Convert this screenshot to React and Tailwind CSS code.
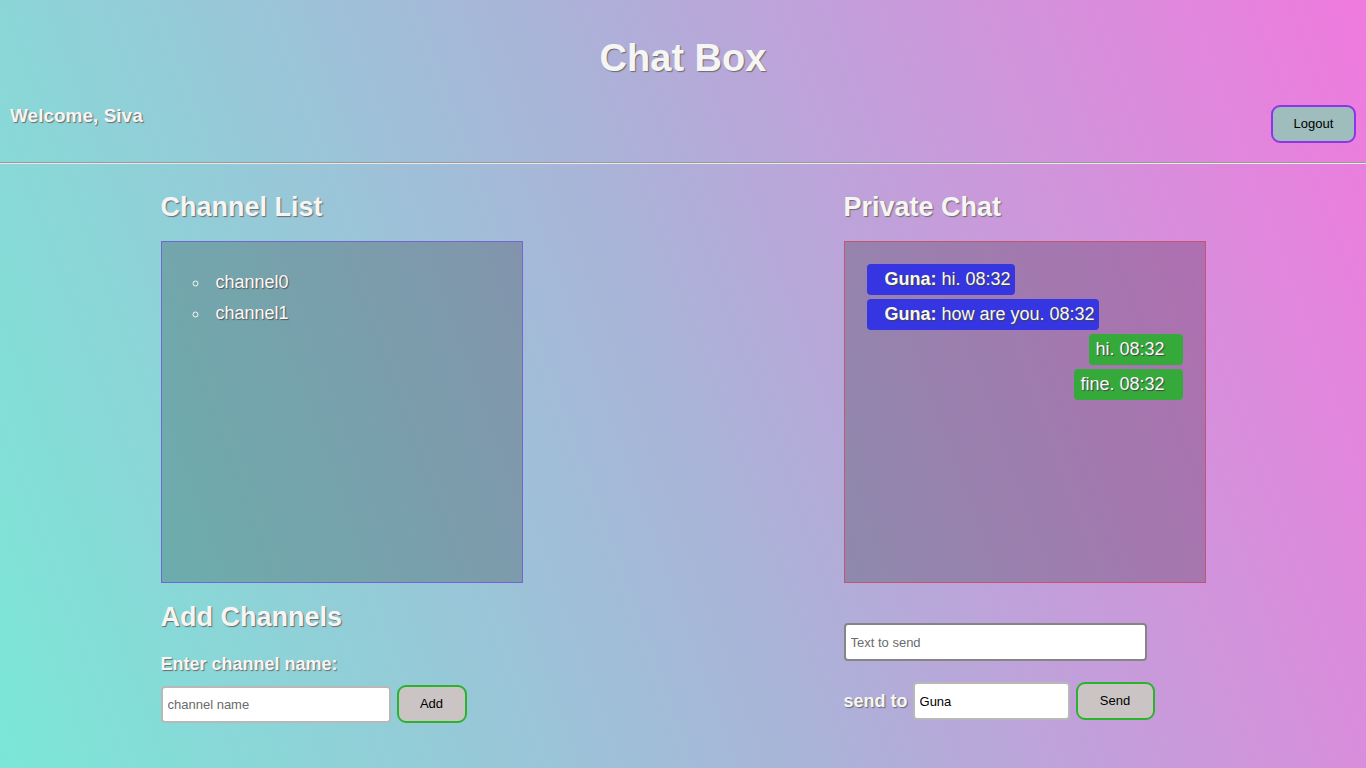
export default function App() {
  const shadow = "[text-shadow:1px_1px_1px_#6b6b6b]";
  return (
    <div
      className="min-h-screen w-full bg-[linear-gradient(70deg,#7be7d7,#aab3d8_50%,#f07ade)] text-white"
      style={{ fontFamily: '"Liberation Sans", Arial, sans-serif' }}
    >
      {/* Header */}
      <div className="pt-[36px] text-center">
        <h1 className="text-[38px] font-bold leading-[44px] text-[#f5f5f5] [text-shadow:1px_1px_1px_#6b6b6b]">Chat Box</h1>
      </div>
      <div className="flex items-start justify-between px-[10px] pt-[25px]">
        <div className="text-[19px] font-bold leading-[22px] text-[#f5f5f5] [text-shadow:1px_1px_1px_#6b6b6b]">Welcome, Siva</div>
        <button className="h-[38px] w-[85px] rounded-[9px] border-2 border-[#8d35e8] bg-[#9ebdbc] text-[13px] text-black">
          Logout
        </button>
      </div>
      <div className="mt-[19px] h-[2px] border-t border-b border-t-[#9a9a9a] border-b-[#e8e8e8]" />

      {/* Columns */}
      <div className="grid grid-cols-2">
        {/* Left */}
        <div className="mx-auto w-[362px] pt-[28px]">
          <h2 className={`text-[27px] font-bold leading-[30px] text-[#f5f5f5] ${shadow}`}>Channel List</h2>
          <div className="mt-[19px] h-[342px] border border-[#7466d0] bg-black/20">
            <ul className="list-[circle] pl-[48px] pt-[25px] text-[18px] leading-[31px] text-[#f8f8f8] [text-shadow:1px_1px_1px_#555]">
              <li className="pl-[6px]">channel0</li>
              <li className="pl-[6px]">channel1</li>
            </ul>
          </div>
          <h2 className={`mt-[19px] text-[27px] font-bold leading-[30px] text-[#f5f5f5] ${shadow}`}>Add Channels</h2>
          <div className={`mt-[22px] text-[18px] font-bold leading-[20px] text-[#f5f5f5] ${shadow}`}>Enter channel name:</div>
          <div className="mt-[11px] flex items-center gap-[6px]">
            <input
              placeholder="channel name"
              className="h-[37px] w-[230px] rounded-[4px] border-2 border-[#b8b8b8] bg-white px-[5px] text-[13px] text-black placeholder:text-[#6b6b6b] outline-none"
            />
            <button className="h-[38px] w-[70px] rounded-[9px] border-2 border-[#2cb22c] bg-[#cbc4c4] text-[13px] text-black">
              Add
            </button>
          </div>
        </div>

        {/* Right */}
        <div className="mx-auto w-[362px] pt-[28px]">
          <h2 className={`text-[27px] font-bold leading-[30px] text-[#f5f5f5] ${shadow}`}>Private Chat</h2>
          <div className="mt-[19px] flex h-[342px] flex-col gap-[4px] border border-[#c25672] bg-black/20 px-[22px] pt-[22px] text-[18px] leading-[31px] text-[#f8f8f8] [text-shadow:1px_1px_1px_#444]">
            <div className="self-start rounded-[4px] bg-[#3535e1] pl-[18px] pr-[4px]">
              <b>Guna:</b> hi. 08:32
            </div>
            <div className="self-start rounded-[4px] bg-[#3535e1] pl-[18px] pr-[4px]">
              <b>Guna:</b> how are you. 08:32
            </div>
            <div className="self-end rounded-[4px] bg-[#35aa3a] pl-[6px] pr-[18px]">hi. 08:32</div>
            <div className="self-end rounded-[4px] bg-[#35aa3a] pl-[6px] pr-[18px]">fine. 08:32</div>
          </div>
          <input
            placeholder="Text to send"
            className="mt-[40px] h-[38px] w-[303px] rounded-[4px] border-2 border-[#858585] bg-white px-[5px] text-[13px] text-black placeholder:text-[#6b6b6b] outline-none"
          />
          <div className="mt-[21px] flex items-center">
            <span className={`text-[18px] font-bold text-[#f5f5f5] ${shadow}`}>send to</span>
            <input
              defaultValue="Guna"
              className="ml-[5px] h-[38px] w-[157px] rounded-[4px] border-2 border-[#b8b8b8] bg-white px-[5px] text-[13px] text-black outline-none"
            />
            <button className="ml-[6px] h-[38px] w-[79px] rounded-[9px] border-2 border-[#2cb22c] bg-[#cbc4c4] text-[13px] text-black">
              Send
            </button>
          </div>
        </div>
      </div>
    </div>
  );
}
